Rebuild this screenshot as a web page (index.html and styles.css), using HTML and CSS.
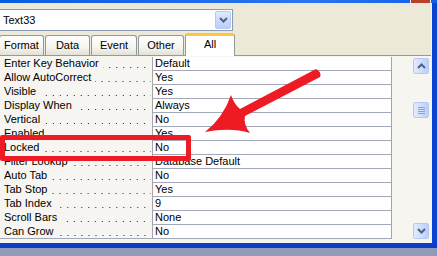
FILE: index.html
```html
<!DOCTYPE html>
<html lang="en">
<head>
    <meta charset="UTF-8">
    <meta name="viewport" content="width=device-width, initial-scale=1.0">
    <title>Property Sheet</title>
    <link rel="stylesheet" href="styles.css">
</head>
<body>
    <div class="window">
        <div class="titlebar"><span class="close"></span></div>
        <div class="frame">
            <div class="panel">
                <div class="combo">
                    <span class="combo-text">Text33</span>
                    <span class="combo-btn">
                        <svg width="9" height="6" viewBox="0 0 9 6"><path d="M1 1 L4.5 4.5 L8 1" fill="none" stroke="#4D6185" stroke-width="2"/></svg>
                    </span>
                </div>

                <div class="tabs">
                    <div class="tab">Format</div>
                    <div class="tab">Data</div>
                    <div class="tab wide">Event</div>
                    <div class="tab wide">Other</div>
                    <div class="tab active">All</div>
                </div>

                <div class="sheet">
                    <div class="grid">
                        <div class="row"><div class="name"><span>Enter Key Behavior</span><i class="dots"></i></div><div class="value">Default</div></div>
                        <div class="row"><div class="name"><span>Allow AutoCorrect</span><i class="dots"></i></div><div class="value">Yes</div></div>
                        <div class="row"><div class="name"><span>Visible</span><i class="dots"></i></div><div class="value">Yes</div></div>
                        <div class="row"><div class="name"><span>Display When</span><i class="dots"></i></div><div class="value">Always</div></div>
                        <div class="row"><div class="name"><span>Vertical</span><i class="dots"></i></div><div class="value">No</div></div>
                        <div class="row"><div class="name"><span>Enabled</span><i class="dots"></i></div><div class="value">Yes</div></div>
                        <div class="row"><div class="name"><span>Locked</span><i class="dots"></i></div><div class="value">No</div></div>
                        <div class="row"><div class="name"><span>Filter Lookup</span><i class="dots"></i></div><div class="value">Database Default</div></div>
                        <div class="row"><div class="name"><span>Auto Tab</span><i class="dots"></i></div><div class="value">No</div></div>
                        <div class="row"><div class="name"><span>Tab Stop</span><i class="dots"></i></div><div class="value">Yes</div></div>
                        <div class="row"><div class="name"><span>Tab Index</span><i class="dots"></i></div><div class="value">9</div></div>
                        <div class="row"><div class="name"><span>Scroll Bars</span><i class="dots"></i></div><div class="value">None</div></div>
                        <div class="row"><div class="name"><span>Can Grow</span><i class="dots"></i></div><div class="value">No</div></div>
                    </div>

                    <div class="scroll">
                        <span class="sbtn">
                            <svg width="9" height="6" viewBox="0 0 9 6"><path d="M1 5 L4.5 1.5 L8 5" fill="none" stroke="#4D6185" stroke-width="2"/></svg>
                        </span>
                        <span class="thumb"><i></i><i></i><i></i><i></i></span>
                        <span class="sbtn down">
                            <svg width="9" height="6" viewBox="0 0 9 6"><path d="M1 1 L4.5 4.5 L8 1" fill="none" stroke="#4D6185" stroke-width="2"/></svg>
                        </span>
                    </div>
                </div>
            </div>
            <div class="edge"></div>
        </div>
        <div class="bottom"></div>
        <div class="taskbar"></div>
    </div>

    <!-- callout drawn over the screenshot -->
    <div class="highlight"></div>
    <svg class="arrow" width="437" height="256" viewBox="0 0 437 256">
        <path d="M316 69 L240 109 Q234 104 231 95 Q223 118 205 132 Q230 127 250 133 Q243 124 245 116 L320 77 Q322 72 316 69 Z" fill="#EE1B24"/>
    </svg>
</body>
</html>
```

FILE: styles.css
```css
* {
    box-sizing: border-box;
}

body {
    margin: 0;
    width: 437px;
    height: 256px;
    overflow: hidden;
    position: relative;
    font-family: "Liberation Sans", Arial, sans-serif;
    font-size: 11px;
    color: #000;
    background: #8F9BB7;
}

.window {
    display: flex;
    flex-direction: column;
    height: 256px;
}

.titlebar {
    height: 3px;
    display: flex;
    justify-content: flex-end;
    background: linear-gradient(to right, #0A5CE0, #2B74F2 70%, #1560E6);
}

.close {
    width: 21px;
    margin-right: 6px;
    background: #B8412A;
    border-left: 1px solid #E8E8F0;
    border-right: 1px solid #E8E8F0;
}

.frame {
    display: flex;
    height: 240px;
}

.panel {
    width: 431px;
    background: #ECE9D8;
    padding-top: 6px;
    display: flex;
    flex-direction: column;
}

.edge {
    flex: 1;
    background: #0843D2;
    border-left: 1px solid #F4F3EE;
}

.bottom {
    height: 5px;
    background: #0B3FC4;
}

.taskbar {
    flex: 1;
    background: #8F9BB7;
}

/* combo box */
.combo {
    margin-left: -1px;
    width: 234px;
    height: 22px;
    border: 1px solid #8A9CB3;
    background: #fff;
    display: flex;
    align-items: center;
    justify-content: space-between;
    padding: 0 1px 0 3px;
}

.combo-btn {
    width: 16px;
    height: 18px;
    border: 1px solid #B5C8F5;
    border-radius: 2px;
    background: linear-gradient(#E0E9FE, #BACDF9);
    display: flex;
    align-items: center;
    justify-content: center;
}

/* tabs */
.tabs {
    display: flex;
    align-items: flex-end;
    gap: 1px;
    height: 24px;
    position: relative;
    z-index: 1;
}

.tab {
    width: 45px;
    height: 20px;
    border: 1px solid #919B9C;
    border-bottom: 0;
    border-radius: 3px 3px 0 0;
    background: linear-gradient(#FFFFFF, #F5F4F0 60%, #E3E1D7);
    text-align: center;
    line-height: 19px;
}

.tab:first-child {
    margin-left: -1px;
}

.tab.wide {
    width: 46px;
}

.tab.active {
    width: 50px;
    height: 23px;
    margin-bottom: -1px;
    background: #fff;
    border-top: 3px solid #FFC73C;
    line-height: 16px;
}

/* property sheet */
.sheet {
    flex: 1;
    display: flex;
    border-top: 1px solid #919B9C;
    padding-top: 1px;
    background: #F6F5F0;
}

.grid {
    width: 392px;
    align-self: flex-start;
    border-right: 1px solid #A5A5A5;
    background: #fff;
}

.row {
    display: flex;
    height: 14px;
}

.name {
    width: 152px;
    display: flex;
    padding-left: 4px;
    line-height: 13px;
    background: #F6F5F1;
    white-space: nowrap;
}

.dots {
    flex: 1;
    margin: 0 1px 0 4px;
    background-image: linear-gradient(to right, #222 1px, transparent 1px);
    background-size: 7px 1px;
    background-repeat: repeat-x;
    background-position: right 0 top 10px;
}

.value {
    flex: 1;
    border-left: 1px solid #A5A5A5;
    border-bottom: 1px solid #A3A8B8;
    padding-left: 2px;
    line-height: 13px;
    white-space: nowrap;
    overflow: hidden;
}

.row:last-child .name {
    border-bottom: 1px solid #A3A8B8;
}

/* scroll bar */
.scroll {
    flex: 1;
    display: flex;
    flex-direction: column;
    align-items: flex-end;
    padding: 1px 2px 4px 0;
}

.sbtn,
.thumb {
    width: 16px;
    height: 16px;
    border: 1px solid #B5C8F5;
    border-radius: 2px;
    background: linear-gradient(to right, #E2EBFE, #BCCFFA);
    display: flex;
    align-items: center;
    justify-content: center;
}

.thumb {
    margin-top: 28px;
    flex-direction: column;
    gap: 1px;
}

.thumb i {
    width: 7px;
    height: 1px;
    background: #8CA3D8;
}

.sbtn.down {
    margin-top: auto;
}

/* callout */
.highlight {
    position: absolute;
    left: 0;
    top: 135px;
    width: 191px;
    height: 26px;
    border: 5px solid #EE1B24;
    border-radius: 2px;
}

.arrow {
    position: absolute;
    left: 0;
    top: 0;
    pointer-events: none;
}
```
